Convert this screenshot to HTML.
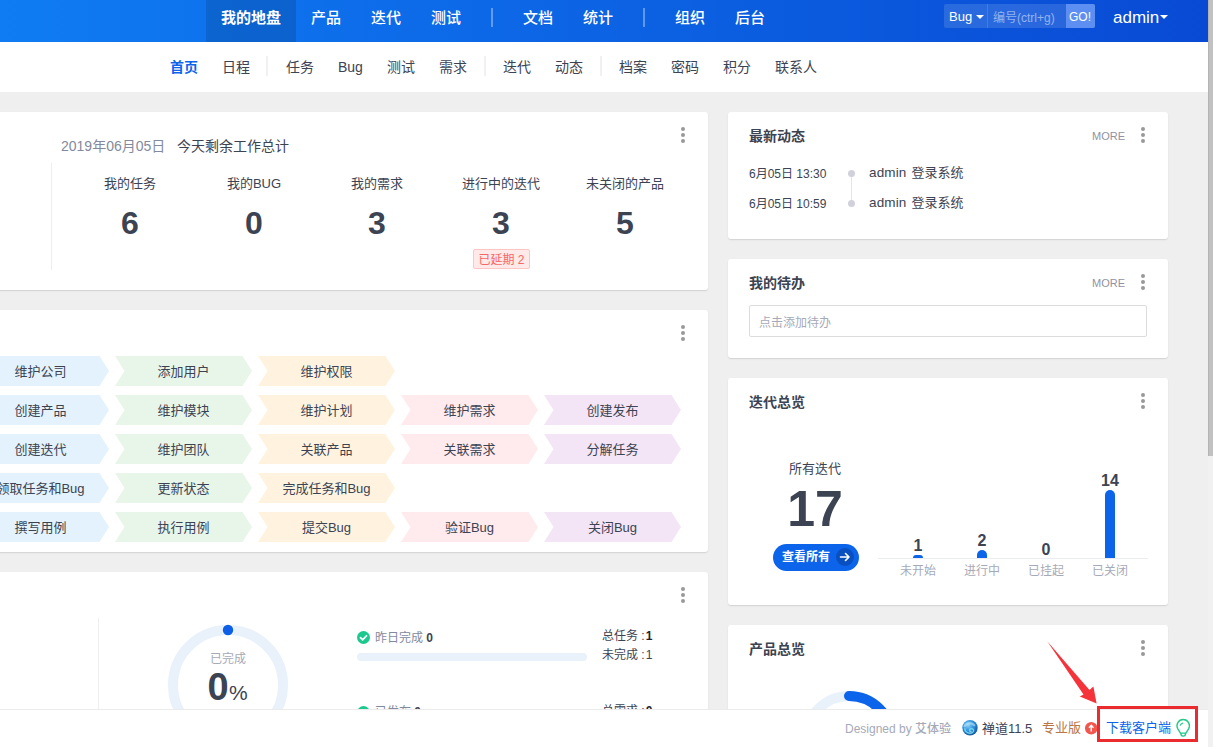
<!DOCTYPE html>
<html lang="zh-CN">
<head>
<meta charset="utf-8">
<title>我的地盘 - 禅道</title>
<style>
*{box-sizing:border-box;margin:0;padding:0}
html,body{width:1213px;height:747px;overflow:hidden}
body{position:relative;background:#efefef;color:#3c4353;font-family:"Liberation Sans","Noto Sans CJK SC",sans-serif;font-size:13px;line-height:20px}
.abs{position:absolute}
.t{position:absolute;white-space:nowrap;line-height:20px}
.c{transform:translateX(-50%)}
/* header */
#header{position:absolute;left:0;top:0;width:1208px;height:42px;background:linear-gradient(90deg,#0f7cf3 0%,#094ad4 100%)}
#header .nav{position:absolute;top:0;height:42px;line-height:35px;color:#fff;font-size:15px;font-weight:500;text-align:center;width:60px;white-space:nowrap}
#header .nav.on{font-weight:bold;background:rgba(0,0,0,.125);width:90px}
#header .dv{position:absolute;top:8px;width:2px;height:19px;background:rgba(255,255,255,.35)}
#subnav{position:absolute;left:0;top:42px;width:1208px;height:50px;background:#fff}
#subnav .it{position:absolute;top:0;height:50px;line-height:51px;font-size:14px;color:#3c4353;white-space:nowrap}
#subnav .it.on{color:#0c64eb;font-weight:bold}
#subnav .sp{position:absolute;top:14px;width:2px;height:20px;background:#f1f1f1}
/* scrollbar */
#sbar{position:absolute;left:1208px;top:0;width:5px;height:747px;background:#f1f1f1}
#sbar i{position:absolute;left:0;top:0;width:5px;height:456px;background:#c1c1c1;border-left:1px solid #b4b4b4}
/* panels */
.panel{position:absolute;background:#fff;border-radius:3px;box-shadow:0 1px 1px rgba(0,0,0,.09),0 1px 3px rgba(0,0,0,.04)}
.panel.l{border-radius:0 3px 3px 0}
.dots{position:absolute;width:4px;height:16px}
.dots i{position:absolute;left:0;width:4px;height:4px;border-radius:50%;background:#999}
.dots i:nth-child(1){top:0}.dots i:nth-child(2){top:6px}.dots i:nth-child(3){top:12px}
.ptitle{position:absolute;font-weight:bold;font-size:14px;color:#3c4353;white-space:nowrap;line-height:20px}
.more{position:absolute;font-size:11px;color:#8f93a1;line-height:20px;letter-spacing:0}
.lbl{position:absolute;width:124px;text-align:center;font-size:13px;line-height:20px;color:#3c4353;top:174px}
.num{position:absolute;width:124px;text-align:center;font-size:32px;line-height:40px;font-weight:bold;color:#3c4353;top:203px}
.chev{position:absolute;height:30px;width:137px;line-height:31px;text-align:center;font-size:13px;color:#3c4353;white-space:nowrap;clip-path:polygon(0 0,127.500px 0,137px 15px,127.500px 30px,0 30px,9.500px 15px)}
.b1{background:#e3f2fd}.b2{background:#e8f5e9}.b3{background:#fff3e0}.b4{background:#ffebee}.b5{background:#f3e5f5}
</style>
</head>
<body>

<div id="header">
  <div class="nav on" style="left:206px">我的地盘</div>
  <div class="nav" style="left:296px">产品</div>
  <div class="nav" style="left:356px">迭代</div>
  <div class="nav" style="left:416px">测试</div>
  <div class="dv" style="left:491px"></div>
  <div class="nav" style="left:508px">文档</div>
  <div class="nav" style="left:568px">统计</div>
  <div class="dv" style="left:643px"></div>
  <div class="nav" style="left:660px">组织</div>
  <div class="nav" style="left:720px">后台</div>

  <div class="abs" style="left:944px;top:4px;width:151px;height:24px;background:rgba(255,255,255,.13);border-radius:2px"></div>
  <div class="abs" style="left:987px;top:4px;width:1px;height:24px;background:rgba(255,255,255,.12)"></div>
  <div class="abs" style="left:1066px;top:4px;width:29px;height:24px;background:#5c8ff1;border-radius:0 2px 2px 0"></div>
  <div class="t" style="left:949px;top:7px;font-size:13px;color:#fff">Bug</div>
  <div class="abs" style="left:976px;top:15px;width:0;height:0;border-left:4px solid transparent;border-right:4px solid transparent;border-top:4px solid #fff"></div>
  <div class="t" style="left:993px;top:8px;font-size:12px;color:rgba(255,255,255,.5)">编号(ctrl+g)</div>
  <div class="t" style="left:1069px;top:7px;font-size:12px;color:#fff;font-weight:500">GO!</div>
  <div class="t" style="left:1113px;top:8px;font-size:17px;color:#fff">admin</div>
  <div class="abs" style="left:1160px;top:15px;width:0;height:0;border-left:4px solid transparent;border-right:4px solid transparent;border-top:4px solid #fff"></div>
</div>

<div id="subnav">
  <div class="it on" style="left:170px">首页</div>
  <div class="it" style="left:222px">日程</div>
  <div class="sp" style="left:266px"></div>
  <div class="it" style="left:286px">任务</div>
  <div class="it" style="left:338px">Bug</div>
  <div class="it" style="left:387px">测试</div>
  <div class="it" style="left:439px">需求</div>
  <div class="sp" style="left:484px"></div>
  <div class="it" style="left:503px">迭代</div>
  <div class="it" style="left:555px">动态</div>
  <div class="sp" style="left:600px"></div>
  <div class="it" style="left:619px">档案</div>
  <div class="it" style="left:671px">密码</div>
  <div class="it" style="left:723px">积分</div>
  <div class="it" style="left:775px">联系人</div>
</div>

<!-- panel 1: today summary -->
<div class="panel l" style="left:-4px;top:112px;width:712px;height:178px"></div>
<div class="t" style="left:61px;top:136px;font-size:14px;color:#838a9d">2019年06月05日</div>
<div class="t" style="left:177px;top:136px;font-size:14px;color:#3c4353">今天剩余工作总计</div>
<div class="abs" style="left:51px;top:163px;width:1px;height:107px;background:#eee"></div>
<div class="dots" style="left:681px;top:127px"><i></i><i></i><i></i></div>
<div class="lbl" style="left:68px">我的任务</div>
<div class="lbl" style="left:192px">我的BUG</div>
<div class="lbl" style="left:315px">我的需求</div>
<div class="lbl" style="left:439px">进行中的迭代</div>
<div class="lbl" style="left:563px">未关闭的产品</div>
<div class="num" style="left:68px">6</div>
<div class="num" style="left:192px">0</div>
<div class="num" style="left:315px">3</div>
<div class="num" style="left:439px">3</div>
<div class="num" style="left:563px">5</div>
<div class="abs" style="left:473px;top:249px;width:57px;height:20px;border:1px solid #ffc4c4;background:#ffe9e9;border-radius:2px;color:#f56767;font-size:12px;line-height:20px;text-align:center;white-space:nowrap">已延期 2</div>

<!-- panel 2: flowchart -->
<div class="panel l" style="left:-4px;top:310px;width:712px;height:242px"></div>
<div class="dots" style="left:681px;top:325px"><i></i><i></i><i></i></div>
<div id="flow">
  <div class="chev b1" style="left:-28px;top:356px">维护公司</div>
  <div class="chev b2" style="left:115px;top:356px">添加用户</div>
  <div class="chev b3" style="left:258px;top:356px">维护权限</div>

  <div class="chev b1" style="left:-28px;top:395px">创建产品</div>
  <div class="chev b2" style="left:115px;top:395px">维护模块</div>
  <div class="chev b3" style="left:258px;top:395px">维护计划</div>
  <div class="chev b4" style="left:401px;top:395px">维护需求</div>
  <div class="chev b5" style="left:544px;top:395px">创建发布</div>

  <div class="chev b1" style="left:-28px;top:434px">创建迭代</div>
  <div class="chev b2" style="left:115px;top:434px">维护团队</div>
  <div class="chev b3" style="left:258px;top:434px">关联产品</div>
  <div class="chev b4" style="left:401px;top:434px">关联需求</div>
  <div class="chev b5" style="left:544px;top:434px">分解任务</div>

  <div class="chev b1" style="left:-28px;top:473px">领取任务和Bug</div>
  <div class="chev b2" style="left:115px;top:473px">更新状态</div>
  <div class="chev b3" style="left:258px;top:473px">完成任务和Bug</div>

  <div class="chev b1" style="left:-28px;top:512px">撰写用例</div>
  <div class="chev b2" style="left:115px;top:512px">执行用例</div>
  <div class="chev b3" style="left:258px;top:512px">提交Bug</div>
  <div class="chev b4" style="left:401px;top:512px">验证Bug</div>
  <div class="chev b5" style="left:544px;top:512px">关闭Bug</div>
</div>

<!-- panel 3: statistic -->
<div class="panel l" style="left:-4px;top:572px;width:712px;height:300px"></div>
<div class="dots" style="left:681px;top:587px"><i></i><i></i><i></i></div>
<div class="abs" style="left:98px;top:618px;width:1px;height:100px;background:#eee"></div>
<svg class="abs" style="left:160px;top:620px" width="136" height="100" viewBox="0 0 136 100">
  <circle cx="68" cy="65" r="55" fill="none" stroke="#e9f1fb" stroke-width="10"/>
  <circle cx="68" cy="10" r="5.200" fill="#0c5fe6"/>
</svg>
<div class="t c" style="left:228px;top:649px;font-size:12px;color:#a6aab8">已完成</div>
<div class="t" style="left:207.500px;top:667px;font-size:38px;font-weight:bold;line-height:40px;color:#3c4353">0</div>
<div class="t" style="left:229px;top:678px;font-size:21px;line-height:30px;color:#3c4353">%</div>
<svg class="abs" style="left:357px;top:631px" width="13" height="13" viewBox="0 0 12 12"><circle cx="6" cy="6" r="6" fill="#1bc98e"/><path d="M3.2 6.2l2 2 3.6-3.8" fill="none" stroke="#fff" stroke-width="1.6" stroke-linecap="round" stroke-linejoin="round"/></svg>
<div class="t" style="left:375px;top:628px;font-size:12px;color:#838a9d">昨日完成 <b style="color:#3c4353">0</b></div>
<div class="abs" style="left:357px;top:653px;width:230px;height:8px;border-radius:4px;background:#e9f1fb"></div>
<div class="t" style="left:602px;top:626px;font-size:12px;color:#3c4353">总任务 :<b style="color:#1c2230;margin-left:1px">1</b></div>
<div class="t" style="left:602px;top:645px;font-size:12px;color:#3c4353">未完成 :<span style="margin-left:1px">1</span></div>
<svg class="abs" style="left:357px;top:706px" width="13" height="13" viewBox="0 0 12 12"><circle cx="6" cy="6" r="6" fill="#1bc98e"/></svg>
<div class="t" style="left:375px;top:702px;font-size:12px;color:#838a9d">已发布 <b style="color:#3c4353">0</b></div>
<div class="t" style="left:602px;top:701px;font-size:12px;color:#3c4353">总需求 :<b style="color:#1c2230;margin-left:1px">0</b></div>

<!-- right A: dynamic -->
<div class="panel" style="left:728px;top:112px;width:440px;height:127px"></div>
<div class="ptitle" style="left:749px;top:126px">最新动态</div>
<div class="more" style="left:1092px;top:126px">MORE</div>
<div class="dots" style="left:1141px;top:127px"><i></i><i></i><i></i></div>
<div class="t" style="left:749px;top:164px;font-size:12px">6月05日 13:30</div>
<div class="t" style="left:749px;top:194px;font-size:12px">6月05日 10:59</div>
<div class="abs" style="left:851px;top:176px;width:1px;height:24px;background:#e4e5ea"></div>
<div class="abs" style="left:848px;top:170px;width:7px;height:7px;border-radius:50%;background:#d0d1dc"></div>
<div class="abs" style="left:848px;top:200px;width:7px;height:7px;border-radius:50%;background:#d0d1dc"></div>
<div class="t" style="left:869px;top:163px;font-size:13px"><span class="adm" style="font-size:13.500px;letter-spacing:.15px">admin</span><span class="cj" style="margin-left:5px">登录系统</span></div>
<div class="t" style="left:869px;top:193px;font-size:13px"><span class="adm" style="font-size:13.500px;letter-spacing:.15px">admin</span><span class="cj" style="margin-left:5px">登录系统</span></div>

<!-- right B: todo -->
<div class="panel" style="left:728px;top:259px;width:440px;height:99px"></div>
<div class="ptitle" style="left:749px;top:273px">我的待办</div>
<div class="more" style="left:1092px;top:273px">MORE</div>
<div class="dots" style="left:1141px;top:274px"><i></i><i></i><i></i></div>
<div class="abs" style="left:749px;top:305px;width:398px;height:32px;border:1px solid #dcdcdc;border-radius:2px;background:#fff"></div>
<div class="t" style="left:759px;top:313px;font-size:12px;color:#a6aab8">点击添加待办</div>

<!-- right C: project overview -->
<div class="panel" style="left:728px;top:378px;width:440px;height:227px"></div>
<div class="ptitle" style="left:749px;top:392px">迭代总览</div>
<div class="dots" style="left:1141px;top:393px"><i></i><i></i><i></i></div>
<div class="t c" style="left:815px;top:459px;font-size:13px">所有迭代</div>
<div class="t c" style="left:815px;top:479px;font-size:50px;line-height:60px;font-weight:bold;color:#3c4353">17</div>
<div class="abs" style="left:773px;top:544px;width:86px;height:27px;border-radius:14px;background:#0c64eb"></div>
<div class="t" style="left:782px;top:547px;font-size:12px;font-weight:bold;color:#fff">查看所有</div>
<svg class="abs" style="left:836px;top:548px" width="18" height="18" viewBox="0 0 18 18"><circle cx="9" cy="9" r="9" fill="#0a4fc0"/><path d="M4.5 9h8.5M9.5 5.5L13 9l-3.500 3.500" fill="none" stroke="#fff" stroke-width="1.6" stroke-linecap="round" stroke-linejoin="round"/></svg>
<div class="abs" style="left:878px;top:558px;width:270px;height:1px;background:#ebecf0"></div>
<div class="abs" style="left:913px;top:555px;width:10px;height:3px;border-radius:5px 5px 0 0;background:#0c64eb"></div>
<div class="abs" style="left:977px;top:550px;width:10px;height:8px;border-radius:5px 5px 0 0;background:#0c64eb"></div>
<div class="abs" style="left:1105px;top:490px;width:10px;height:68px;border-radius:5px 5px 0 0;background:#0c64eb"></div>
<div class="t c" style="left:918px;top:536px;font-size:16px;font-weight:bold">1</div>
<div class="t c" style="left:982px;top:531px;font-size:16px;font-weight:bold">2</div>
<div class="t c" style="left:1046px;top:540px;font-size:16px;font-weight:bold">0</div>
<div class="t c" style="left:1110px;top:471px;font-size:16px;font-weight:bold">14</div>
<div class="t c" style="left:918px;top:561px;font-size:12px;color:#a6aab8">未开始</div>
<div class="t c" style="left:982px;top:561px;font-size:12px;color:#a6aab8">进行中</div>
<div class="t c" style="left:1046px;top:561px;font-size:12px;color:#a6aab8">已挂起</div>
<div class="t c" style="left:1110px;top:561px;font-size:12px;color:#a6aab8">已关闭</div>

<!-- right D: product overview -->
<div class="panel" style="left:728px;top:625px;width:440px;height:200px"></div>
<div class="ptitle" style="left:749px;top:639px">产品总览</div>
<div class="dots" style="left:1141px;top:640px"><i></i><i></i><i></i></div>
<svg class="abs" style="left:790px;top:685px" width="120" height="62" viewBox="0 0 120 62">
  <circle cx="59" cy="54" r="43" fill="none" stroke="#e9f1fb" stroke-width="10"/>
  <path d="M59 11 A43 43 0 0 1 102 54" fill="none" stroke="#0c64eb" stroke-width="10" stroke-linecap="round"/>
</svg>

<!-- red arrow annotation -->
<svg class="abs" style="left:1040px;top:635px" width="64" height="76" viewBox="0 0 64 76">
  <polygon points="7.200,6.300 49.500,55 53.400,51.400 56.600,68.600 39.800,61.600 43.500,59.500" fill="#f5333a"/>
</svg>

<!-- footer -->
<div class="abs" style="left:0;top:709px;width:1208px;height:38px;background:#fff;border-top:1px solid #ebebeb"></div>
<div class="t" style="left:845px;top:719px;font-size:12px;color:#a6aab8">Designed by <span style="font-weight:500">艾体验</span></div>
<svg class="abs" style="left:962px;top:720px" width="16" height="16" viewBox="0 0 16 16">
  <defs><radialGradient id="gl" cx="38%" cy="32%" r="72%"><stop offset="0" stop-color="#8ed3f6"/><stop offset=".5" stop-color="#2f93dc"/><stop offset="1" stop-color="#13559c"/></radialGradient></defs>
  <circle cx="8" cy="7.800" r="7.700" fill="url(#gl)"/>
  <path d="M2.600 6.200C4.500 2.800 9.800 2.600 12.300 5.200" fill="none" stroke="#c6ecfb" stroke-opacity=".55" stroke-width="2.200" stroke-linecap="round"/>
  <path d="M2.800 8.600C2.800 12.800 8.600 14.800 11.400 11.600C12.600 9.600 9.800 7.800 8 9.300C7 10.400 7.800 11.600 9.100 11.300" fill="none" stroke="#86e4f7" stroke-opacity=".85" stroke-width="1.300" stroke-linecap="round"/>
</svg>
<div class="t" style="left:982px;top:719px;font-size:13px;color:#3c4353">禅道11.5</div>
<div class="t" style="left:1042px;top:718px;font-size:13px;color:#b97646">专业版</div>
<svg class="abs" style="left:1084.500px;top:722px" width="12.500" height="12.500" viewBox="0 0 12 12"><circle cx="6" cy="6" r="6" fill="#f2564d"/><path d="M6 9V3.500M3.800 5.500L6 3.200l2.200 2.300" fill="none" stroke="#fff" stroke-width="1.400"/></svg>
<div class="abs" style="left:1097px;top:706px;width:101px;height:36px;border:3px solid #ea2c31"></div>
<div class="t" style="left:1106px;top:718px;font-size:13px;color:#0c64eb">下载客户端</div>
<svg class="abs" style="left:1175px;top:718px" width="17" height="21" viewBox="0 0 17 21">
  <path d="M5.500 15.100L2.830 10.800A6.200 6.200 0 1 1 13.570 10.800L10.900 15.100z" fill="none" stroke="#27c98b" stroke-width="1.400" stroke-linejoin="round"/>
  <path d="M5.900 15.100v0.700a2.300 2.300 0 0 0 4.600 0v-0.700" fill="none" stroke="#27c98b" stroke-width="1.400" stroke-linejoin="round"/>
  <path d="M5.200 7.300Q5.900 5.600 7.800 5.100" stroke="#27c98b" stroke-width="1.100" fill="none" stroke-linecap="round"/>
</svg>

<div id="sbar"><i></i></div>
</body>
</html>
